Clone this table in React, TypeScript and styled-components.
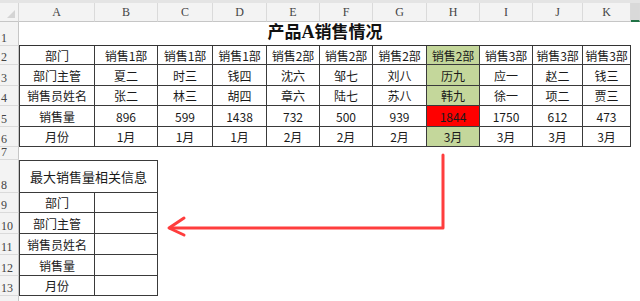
import styled, { createGlobalStyle } from 'styled-components';

const GlobalStyle = createGlobalStyle`
  html, body {
    margin: 0;
    padding: 0;
    background: #fff;
  }
  * {
    box-sizing: border-box;
  }
`;

const COLS = ['A', 'B', 'C', 'D', 'E', 'F', 'G', 'H', 'I', 'J', 'K', 'L'];
const ROW_HEIGHTS = [24, 19, 21, 20, 21, 20, 13, 33, 20, 21, 21, 21, 20, 20];

const Page = styled.div`
  position: relative;
  width: 640px;
  height: 301px;
  overflow: hidden;
  background: #fff;
  font-family: 'Noto Sans CJK SC', 'Noto Sans', sans-serif;
`;

const TopStrip = styled.div`
  height: 3px;
  background: #e4e4e4;
`;

const Sheet = styled.div`
  display: grid;
  grid-template-columns: 19px 76px 63px 55px 54px 53px 53px 54px 53px 53px 50px 48px 1fr;
  grid-template-rows: 19px ${ROW_HEIGHTS.map(h => `${h}px`).join(' ')};
`;

const Corner = styled.div`
  position: relative;
  background: #f3f3f3;
  border-right: 1px solid #d6d6d6;
  border-bottom: 1px solid #c6c6c6;

  &::after {
    content: '';
    position: absolute;
    right: 3px;
    bottom: 3px;
    border-left: 8px solid transparent;
    border-bottom: 8px solid #d4d4d4;
  }
`;

const ColHeader = styled.div<{ $active?: boolean }>`
  display: flex;
  align-items: center;
  justify-content: center;
  background: ${p => (p.$active ? '#d9d9d9' : '#f3f3f3')};
  border-right: 1px solid #dadada;
  border-bottom: ${p => (p.$active ? '2px solid #217346' : '1px solid #c6c6c6')};
  font-family: 'Liberation Serif', 'DejaVu Serif', serif;
  font-size: 12px;
  color: #444;
`;

const RowHeader = styled.div`
  display: flex;
  align-items: flex-end;
  padding: 0 0 1px 1px;
  background: #f3f3f3;
  border-right: 1px solid #c6c6c6;
  border-bottom: 1px solid #dadada;
  font-family: 'Liberation Serif', 'DejaVu Serif', serif;
  font-size: 12px;
  line-height: 1;
  color: #444;
`;

const Blank = styled.div``;

const Title = styled.div`
  grid-column: 2 / 13;
  display: flex;
  align-items: flex-end;
  justify-content: center;
  padding-bottom: 2px;
  font-size: 17px;
  font-weight: 700;
  color: #111;
  border-bottom: 1px solid #333;
`;

const Latin = styled.span`
  font-family: 'Liberation Serif', serif;
  font-size: 18px;
`;

const Cell = styled.div<{ $bg?: string; $left?: boolean; $span?: number; $size?: number }>`
  display: flex;
  align-items: center;
  justify-content: center;
  grid-column: span ${p => p.$span ?? 1};
  background: ${p => p.$bg ?? '#fff'};
  border-right: 1px solid #3a3a3a;
  border-bottom: 1px solid #3a3a3a;
  border-left: ${p => (p.$left ? '1px solid #3a3a3a' : 'none')};
  font-size: ${p => p.$size ?? 12}px;
  color: #1a1a1a;
  white-space: nowrap;
  overflow: hidden;
`;

const Arrow = styled.svg`
  position: absolute;
  left: 0;
  top: 0;
  pointer-events: none;
`;

const GREEN = '#c4d79b';
const RED = '#ff0000';

const mainRows: string[][] = [
  ['部门', '销售1部', '销售1部', '销售1部', '销售2部', '销售2部', '销售2部', '销售2部', '销售3部', '销售3部', '销售3部'],
  ['部门主管', '夏二', '时三', '钱四', '沈六', '邹七', '刘八', '历九', '应一', '赵二', '钱三'],
  ['销售员姓名', '张二', '林三', '胡四', '章六', '陆七', '苏八', '韩九', '徐一', '项二', '贾三'],
  ['销售量', '896', '599', '1438', '732', '500', '939', '1844', '1750', '612', '473'],
  ['月份', '1月', '1月', '1月', '2月', '2月', '2月', '3月', '3月', '3月', '3月'],
];

const lookupLabels = ['部门', '部门主管', '销售员姓名', '销售量', '月份'];

const highlight = (row: number, col: number) => {
  if (col !== 7) return undefined;
  return row === 3 ? RED : GREEN;
};

const App = () => {
  return (
    <Page>
      <GlobalStyle />
      <TopStrip />
      <Sheet>
        <Corner />
        {COLS.map(c =>
          c === 'L' ? <ColHeader key={c} $active /> : <ColHeader key={c}>{c}</ColHeader>,
        )}

        {/* row 1: merged title */}
        <RowHeader>1</RowHeader>
        <Title>
          产品<Latin>A</Latin>销售情况
        </Title>
        <Blank />

        {/* rows 2-6: sales table */}
        {mainRows.map((row, r) => [
          <RowHeader key={`h${r}`}>{r + 2}</RowHeader>,
          ...row.map((text, c) => (
            <Cell key={`${r}-${c}`} $left={c === 0} $bg={highlight(r, c)}>
              {text}
            </Cell>
          )),
          <Blank key={`b${r}`} />,
        ])}

        {/* row 7 */}
        <RowHeader>7</RowHeader>
        {COLS.map(c => (
          <Blank key={`r7${c}`} />
        ))}

        {/* row 8: merged heading of lookup table */}
        <RowHeader>8</RowHeader>
        <Cell $left $span={2} $size={13} style={{ borderTop: '1px solid #3a3a3a' }}>
          最大销售量相关信息
        </Cell>
        {COLS.slice(2).map(c => (
          <Blank key={`r8${c}`} />
        ))}

        {/* rows 9-13: lookup table */}
        {lookupLabels.map((label, r) => [
          <RowHeader key={`lh${r}`}>{r + 9}</RowHeader>,
          <Cell key={`la${r}`} $left>
            {label}
          </Cell>,
          <Cell key={`lb${r}`} />,
          ...COLS.slice(2).map(c => <Blank key={`l${r}${c}`} />),
        ])}

        <RowHeader>14</RowHeader>
      </Sheet>

      <Arrow width={640} height={301} viewBox="0 0 640 301">
        <g fill="none" stroke="#ff3d3d" strokeWidth={3} strokeLinecap="round" strokeLinejoin="round">
          <path d="M443 155 V228 H170" />
          <path d="M184 218 L169 228 L184 235" />
        </g>
      </Arrow>
    </Page>
  );
};

export default App;
